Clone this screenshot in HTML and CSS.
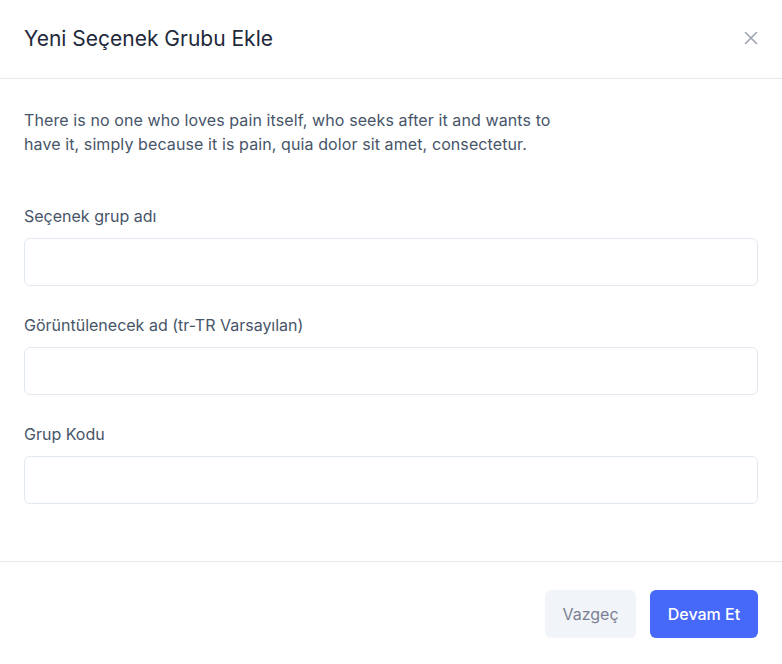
FILE: index.html
```html
<!DOCTYPE html>
<html lang="tr">
<head>
<meta charset="utf-8">
<title>Yeni Seçenek Grubu Ekle</title>
<link rel="stylesheet" href="styles.css">
</head>
<body>
<div class="modal">
  <div class="modal-header">
    <h2 class="modal-title">Yeni Seçenek Grubu Ekle</h2>
    <button class="close-btn" aria-label="Kapat">
      <svg width="14" height="14" viewBox="0 0 14 14" fill="none" stroke="#9ca3af" stroke-width="1.6" stroke-linecap="round"><path d="M1.5 1.5L12.5 12.5M12.5 1.5L1.5 12.5"/></svg>
    </button>
  </div>
  <div class="modal-body">
    <p class="intro">There is no one who loves pain itself, who seeks after it and wants to have it, simply because it is pain, quia dolor sit amet, consectetur.</p>
    <div class="field">
      <label class="field-label">Seçenek grup adı</label>
      <input class="field-input" type="text">
    </div>
    <div class="field">
      <label class="field-label">Görüntülenecek ad (tr-TR Varsayılan)</label>
      <input class="field-input" type="text">
    </div>
    <div class="field">
      <label class="field-label">Grup Kodu</label>
      <input class="field-input" type="text">
    </div>
  </div>
  <div class="modal-footer">
    <button class="btn btn-light">Vazgeç</button>
    <button class="btn btn-primary">Devam Et</button>
  </div>
</div>
</body>
</html>
```
FILE: styles.css
```css
* { box-sizing: border-box; }
body {
  margin: 0;
  background: #ffffff;
  font-family: Inter, "Noto Sans", sans-serif;
  color: #475569;
}
.modal {
  width: 782px;
  background: #fff;
}
.modal-header {
  height: 79px;
  padding: 0 24px;
  display: flex;
  align-items: center;
  justify-content: space-between;
  border-bottom: 1px solid #e8e9ef;
}
.modal-title {
  margin: 0;
  font-size: 21px;
  font-weight: 400;
  color: #1e293b;
  padding-bottom: 2px;
}
.close-btn {
  border: 0;
  background: none;
  padding: 0;
  width: 14px;
  height: 14px;
  display: flex;
  cursor: pointer;
  margin-bottom: 2px;
}
.modal-body {
  padding: 29px 24px 57px;
}
.intro {
  margin: 0 0 48px;
  max-width: 556px;
  font-size: 16px;
  line-height: 24px;
  letter-spacing: 0.1px;
  color: #475569;
}
.field {
  margin-bottom: 27px;
}
.field:last-child { margin-bottom: 0; }
.field-label {
  display: block;
  font-size: 16px;
  line-height: 24px;
  margin-bottom: 10px;
  color: #475569;
}
.field-input {
  display: block;
  width: 100%;
  height: 48px;
  border: 1px solid #e2e8f0;
  border-radius: 6px;
  background: #fff;
  font-family: inherit;
  font-size: 16px;
  padding: 0 16px;
  outline: none;
}
.modal-footer {
  border-top: 1px solid #e8e9ef;
  padding: 28px 24px 26px;
  display: flex;
  justify-content: flex-end;
  gap: 14px;
}
.btn {
  height: 48px;
  border: 0;
  border-radius: 6px;
  font-family: inherit;
  font-size: 16px;
  padding: 0 17px;
  white-space: nowrap;
  cursor: pointer;
}
.btn-light {
  background: #f1f5f9;
  color: #7c8093;
  min-width: 91px;
}
.btn-primary {
  background: #4669fa;
  color: #fff;
  font-weight: 500;
  min-width: 108px;
}
```
